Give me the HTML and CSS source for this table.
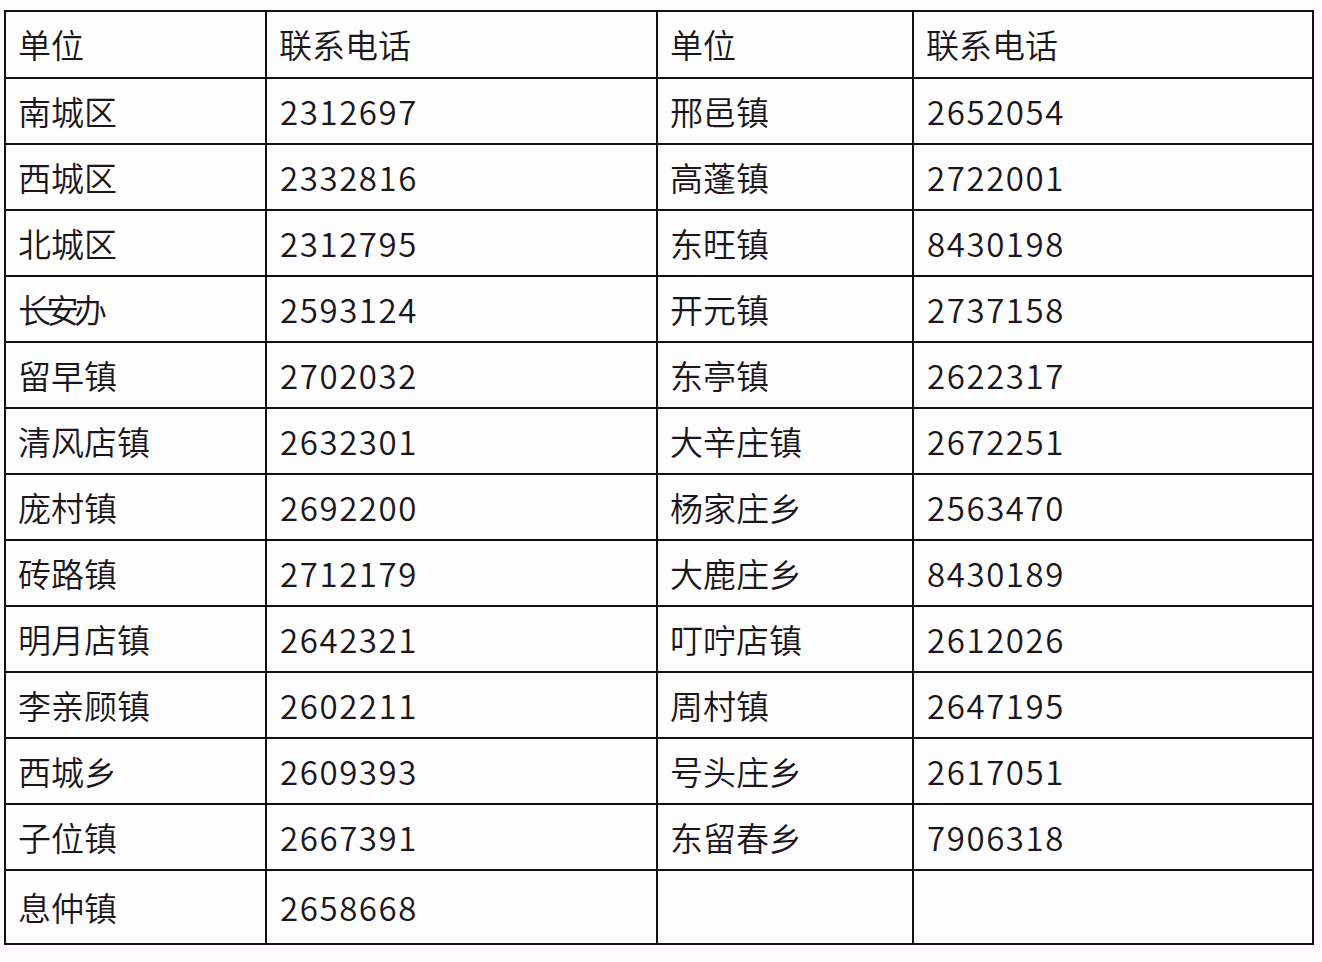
FILE: index.html
```html
<!DOCTYPE html>
<html lang="zh-CN">
<head>
<meta charset="utf-8">
<title>联系电话</title>
<link rel="stylesheet" href="styles.css">
</head>
<body>
<table class="phones">
  <colgroup>
    <col class="c1"><col class="c2"><col class="c3"><col class="c4">
  </colgroup>
  <tr class="head"><td>单位</td><td>联系电话</td><td>单位</td><td>联系电话</td></tr>
  <tr><td>南城区</td><td class="num">2312697</td><td>邢邑镇</td><td class="num">2652054</td></tr>
  <tr><td>西城区</td><td class="num">2332816</td><td>高蓬镇</td><td class="num">2722001</td></tr>
  <tr><td>北城区</td><td class="num">2312795</td><td>东旺镇</td><td class="num">8430198</td></tr>
  <tr><td class="tight">长安办</td><td class="num">2593124</td><td>开元镇</td><td class="num">2737158</td></tr>
  <tr><td>留早镇</td><td class="num">2702032</td><td>东亭镇</td><td class="num">2622317</td></tr>
  <tr><td>清风店镇</td><td class="num">2632301</td><td>大辛庄镇</td><td class="num">2672251</td></tr>
  <tr><td>庞村镇</td><td class="num">2692200</td><td>杨家庄乡</td><td class="num">2563470</td></tr>
  <tr><td>砖路镇</td><td class="num">2712179</td><td>大鹿庄乡</td><td class="num">8430189</td></tr>
  <tr><td>明月店镇</td><td class="num">2642321</td><td>叮咛店镇</td><td class="num">2612026</td></tr>
  <tr><td>李亲顾镇</td><td class="num">2602211</td><td>周村镇</td><td class="num">2647195</td></tr>
  <tr><td>西城乡</td><td class="num">2609393</td><td>号头庄乡</td><td class="num">2617051</td></tr>
  <tr><td>子位镇</td><td class="num">2667391</td><td>东留春乡</td><td class="num">7906318</td></tr>
  <tr class="last"><td>息仲镇</td><td class="num">2658668</td><td></td><td></td></tr>
</table>
</body>
</html>
```

FILE: styles.css
```css
html, body {
  margin: 0;
  padding: 0;
  background: #fdfbfd;
}
body {
  padding: 10px 0 0 4px;
  font-family: "Noto Sans CJK SC", "Noto Sans", sans-serif;
  font-weight: 350;
  color: #1a161c;
}
.phones {
  border-collapse: separate;
  border-spacing: 0;
  table-layout: fixed;
  width: 1310px;
  border-top: 2px solid #111;
  border-left: 2px solid #111;
  background: #fefdfe;
}
.c1 { width: 261px; }
.c2 { width: 391px; }
.c3 { width: 256px; }
.c4 { width: 400px; }
.phones td {
  box-sizing: border-box;
  height: 66px;
  padding: 0 0 0 12px;
  border-right: 2px solid #111;
  border-bottom: 2px solid #111;
  font-size: 33px;
  line-height: 1;
  vertical-align: middle;
  white-space: nowrap;
  overflow: hidden;
}
.phones .head td { height: 67px; }
.phones .last td { height: 74px; }
.phones td.num {
  letter-spacing: 1.6px;
  padding-left: 13px;
}
.phones td.tight { letter-spacing: -5px; }
```
